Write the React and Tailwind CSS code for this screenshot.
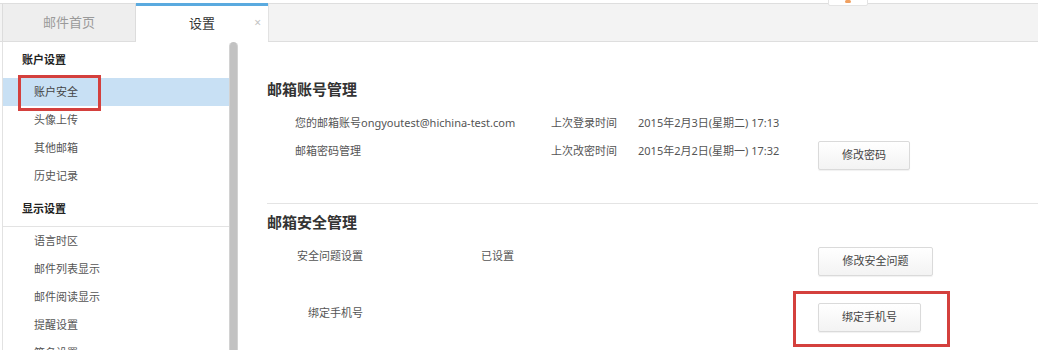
import React from 'react';

const menu = [
  { title: '账户设置', items: ['账户安全', '头像上传', '其他邮箱', '历史记录'] },
  { title: '显示设置', items: ['语言时区', '邮件列表显示', '邮件阅读显示', '提醒设置', '签名设置'] },
];

function Btn({ children, className = '' }) {
  return (
    <button
      className={`h-[29px] rounded-[2px] border border-[#dadada] bg-gradient-to-b from-white to-[#f3f3f3] text-[11px] text-[#444] shadow-[0_1px_1px_rgba(0,0,0,0.06)] ${className}`}
    >
      {children}
    </button>
  );
}

function Sidebar() {
  return (
    <div className="flex w-[239px] shrink-0">
      <div className="ml-[2px] w-[227px] border-l border-[#e2e2e2] text-[11px] text-[#555]">
        {menu.map((group, gi) => (
          <div key={group.title}>
            <div
              className={`pl-[19px] font-bold text-[#222] ${
                gi === 0 ? 'h-[36px] pt-[6px] leading-[24px]' : 'h-[37px] border-b border-[#e3e3e3] pt-[7px] leading-[24px]'
              }`}
            >
              {group.title}
            </div>
            {group.items.map((item) => {
              const active = item === '账户安全';
              return (
                <div
                  key={item}
                  className={`relative h-[28px] pl-[31px] leading-[28px] ${active ? 'bg-[#c8e0f4] text-[#444]' : ''}`}
                >
                  {item}
                  {active && (
                    <div className="absolute left-[15px] top-[-3px] h-[36px] w-[83px] border-[3px] border-[#d4403d]" />
                  )}
                </div>
              );
            })}
          </div>
        ))}
      </div>
      <div className="w-[10px]">
        <div className="h-[320px] w-[9px] rounded-t-[5px] border-x border-[#d2d2d2] bg-[#c2c2c2]" />
      </div>
    </div>
  );
}

function Main() {
  return (
    <div className="flex-1 pl-[28px] pt-[35px] text-[11px] text-[#555]">
      <h2 className="text-[15px] font-bold leading-[24px] text-[#333]">邮箱账号管理</h2>
      <div className="mt-[8px] pl-[28px]">
        <div className="flex h-[28px] items-center">
          <span className="w-[256px]">您的邮箱账号ongyoutest@hichina-test.com</span>
          <span className="w-[87px]">上次登录时间</span>
          <span>2015年2月3日(星期二) 17:13</span>
        </div>
        <div className="flex items-start">
          <span className="w-[256px] leading-[28px]">邮箱密码管理</span>
          <span className="w-[87px] leading-[28px]">上次改密时间</span>
          <span className="w-[180px] leading-[28px]">2015年2月2日(星期一) 17:32</span>
          <Btn className="mt-[4px] w-[92px]">修改密码</Btn>
        </div>
      </div>

      <div className="mt-[33px] border-t border-[#e4e4e4]" />

      <h2 className="mt-[6px] text-[15px] font-bold leading-[24px] text-[#333]">邮箱安全管理</h2>
      <div className="mt-[8px] pl-[28px]">
        <div className="flex items-start">
          <span className="w-[68px] text-right leading-[28px]">安全问题设置</span>
          <span className="w-[455px] pl-[118px] leading-[28px]">已设置</span>
          <Btn className="mt-[5px] w-[115px]">修改安全问题</Btn>
        </div>
        <div className="mt-[15px] flex items-start">
          <span className="mt-[8px] w-[68px] text-right leading-[28px]">绑定手机号</span>
          <div className="ml-[430px] h-[56px] w-[157px] border-[3px] border-[#d4403d] pl-[22px] pt-[9px]">
            <Btn className="w-[103px]">绑定手机号</Btn>
          </div>
        </div>
      </div>
    </div>
  );
}

export default function App() {
  return (
    <div className="relative h-[350px] w-[1038px] overflow-hidden bg-white font-['Noto_Sans','Noto_Sans_CJK_SC',sans-serif]">
      <div className="h-[42px] pt-[3px]">
        <div className="flex h-[39px] border-y border-[#dedede] bg-[#f3f3f3] pl-[2px]">
          <div className="flex w-[134px] items-center justify-center border-x border-[#dcdcdc] bg-[#eeeeee] text-[13px] text-[#9a9a9a]">
            邮件首页
          </div>
          <div className="relative -mb-px -mt-px flex w-[132px] items-center justify-center border-t-[3px] border-[#5aaadf] bg-white text-[13px] text-[#333]">
            设置
            <span className="absolute right-[7px] top-[8px] text-[12px] text-[#c4c4c4]">×</span>
          </div>
          <div className="flex-1 border-l border-[#e2e2e2]" />
        </div>
      </div>
      <div className="absolute left-[828px] top-[-2px] h-[8px] w-[40px] rounded-b-[2px] border border-[#e4e4e4] bg-white">
        <div className="mx-auto mt-[1px] h-[3px] w-[6px] rounded-full bg-[#f0a060]" />
      </div>
      <div className="flex h-[308px]">
        <Sidebar />
        <Main />
      </div>
    </div>
  );
}
